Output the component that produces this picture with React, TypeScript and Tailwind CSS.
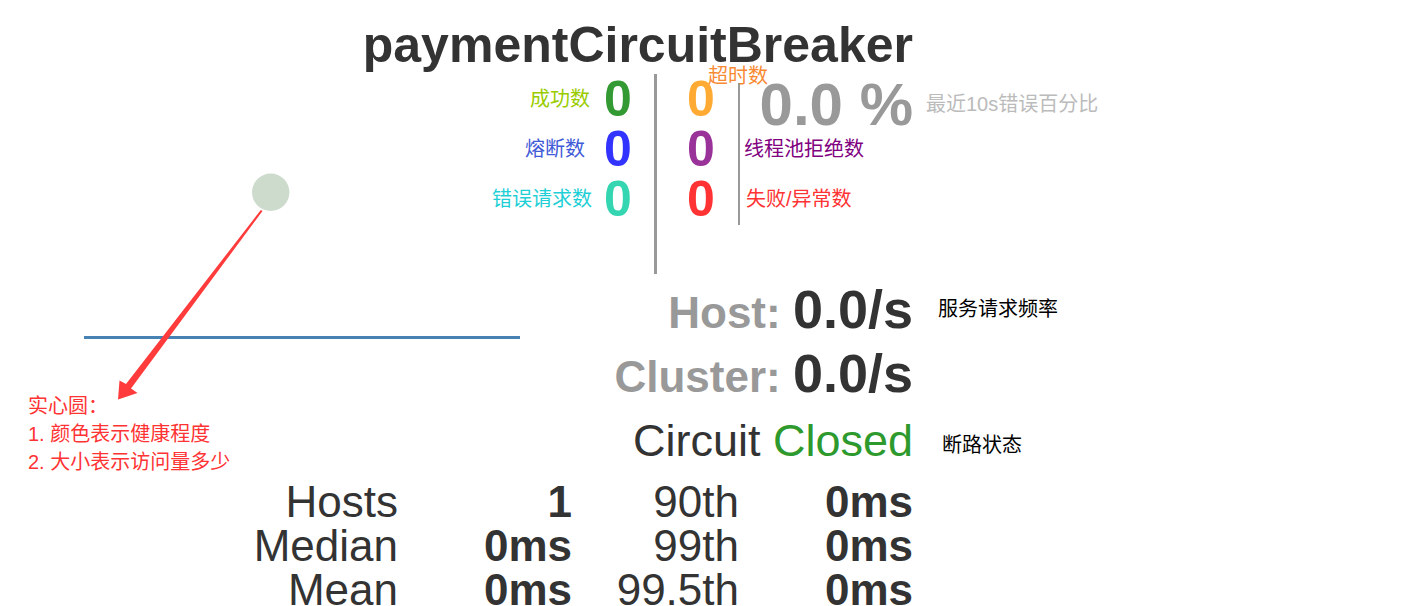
import React from 'react'

const leftRows = [
  { label: '成功数', labelColor: 'text-[#99cc00]', gap: 'mr-[14px]', numColor: 'text-[#339933]' },
  { label: '熔断数', labelColor: 'text-[#3f5bd8]', gap: 'mr-[19px]', numColor: 'text-[#3333ff]' },
  { label: '错误请求数', labelColor: 'text-[#1fcfd6]', gap: 'mr-[12px]', numColor: 'text-[#33d6b0]' },
]

const midColors = ['text-[#ffaa33]', 'text-[#993399]', 'text-[#ff3333]']

const stats = [
  ['Hosts', '1', '90th', '0ms'],
  ['Median', '0ms', '99th', '0ms'],
  ['Mean', '0ms', '99.5th', '0ms'],
]

function Chart() {
  // bubble + sparkline drawn behind the counters, plus the red pointer arrow
  return (
    <svg className="absolute left-0 top-0 pointer-events-none" width="1428" height="606">
      <line x1="84" y1="337.5" x2="520" y2="337.5" stroke="#4682b4" strokeWidth="3" />
      <circle cx="270.7" cy="192.3" r="18.7" fill="#cddbcd" />
      <polygon
        points="260.8,210 262.5,211 131,388.5 137.5,393 118,399.5 119.5,380.5 126,384"
        fill="#ff3b3b"
      />
    </svg>
  )
}

export default function App() {
  return (
    <div className="relative w-[1428px] h-[606px] overflow-hidden bg-white font-['Liberation_Sans','Noto_Sans_CJK_SC',sans-serif]">
      <Chart />

      <div className="relative w-[913px] pt-[20px] flex flex-col items-end text-right">
        <h1 className="text-[50px] leading-[50px] font-bold text-[#333] whitespace-nowrap">
          paymentCircuitBreaker
        </h1>

        <div className="relative flex mt-[4px]">
          <div className="flex flex-col items-end">
            {leftRows.map((r) => (
              <div key={r.label} className="flex h-[50px] items-center">
                <span className={`text-[20px] leading-[28px] whitespace-nowrap ${r.labelColor} ${r.gap}`}>
                  {r.label}
                </span>
                <span className={`w-[28px] text-center text-[50px] leading-[50px] font-bold ${r.numColor}`}>0</span>
              </div>
            ))}
          </div>

          <div className="ml-[22px] w-[3px] h-[200px] bg-[#999]" />

          <div className="flex flex-col w-[81px] pl-[30px]">
            {midColors.map((c, i) => (
              <div key={i} className={`h-[50px] w-[28px] text-center text-[50px] leading-[50px] font-bold ${c}`}>
                0
              </div>
            ))}
          </div>

          <div className="mt-[9px] w-[2px] h-[142px] bg-[#999]" />

          <div className="relative w-[173px] flex flex-col text-left">
            <div className="h-[50px] text-right">
              <div className="text-[60px] leading-[61px] font-bold text-[#999] whitespace-nowrap">0.0 %</div>
            </div>
            <div className="h-[50px] flex items-center pl-[4px] text-[20px] leading-[28px] text-[#800080] whitespace-nowrap">
              线程池拒绝数
            </div>
            <div className="h-[50px] flex items-center pl-[6px] text-[20px] leading-[28px] text-[#ff3333] whitespace-nowrap">
              失败/异常数
            </div>
            <span className="absolute left-[186px] top-[16px] text-[20px] leading-[28px] text-[#bbb] whitespace-nowrap">
              最近10s错误百分比
            </span>
          </div>

          <span className="absolute right-[145px] top-[-12px] text-[20px] leading-[28px] text-[#f88a34] whitespace-nowrap">
            超时数
          </span>
        </div>

        <div className="relative w-full mt-[5px] text-[54px] leading-[60px] font-bold whitespace-nowrap">
          <span className="text-[44px] leading-[60px] text-[#999]">Host: </span>
          <span className="text-[54px] leading-[60px] text-[#333]">0.0/s</span>
          <span className="absolute left-[938px] top-[16px] text-[20px] leading-[28px] font-normal text-black text-left">
            服务请求频率
          </span>
        </div>

        <div className="w-full text-[54px] leading-[60px] font-bold whitespace-nowrap">
          <span className="text-[44px] leading-[60px] text-[#999]">Cluster: </span>
          <span className="text-[54px] leading-[60px] text-[#333]">0.0/s</span>
        </div>

        <div className="relative w-full mt-[9px] text-[45px] leading-[50px] text-[#333] whitespace-nowrap">
          Circuit <span className="text-[#2e9a2e]">Closed</span>
          <span className="absolute left-[942px] top-[15px] text-[20px] leading-[28px] text-black text-left">
            断路状态
          </span>
        </div>

        <div className="mt-[14px] grid grid-cols-[173px_174px_167px_174px] text-[44px] leading-[44px] text-[#333] whitespace-nowrap">
          {stats.map((row) => (
            <React.Fragment key={row[0]}>
              <div>{row[0]}</div>
              <div className="font-bold">{row[1]}</div>
              <div>{row[2]}</div>
              <div className="font-bold">{row[3]}</div>
            </React.Fragment>
          ))}
        </div>
      </div>

      <div className="absolute left-[28px] top-[392px] text-[20px] leading-[28px] text-[#ff3333] whitespace-nowrap">
        <div>实心圆：</div>
        <div>1. 颜色表示健康程度</div>
        <div>2. 大小表示访问量多少</div>
      </div>
    </div>
  )
}
